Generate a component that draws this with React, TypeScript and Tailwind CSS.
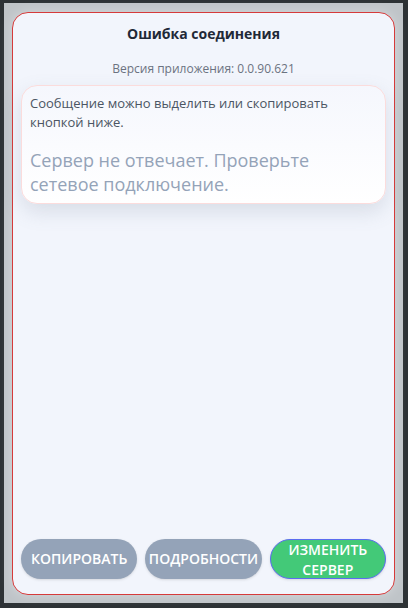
import React from "react";

export default function App() {
  return (
    <div
      className="w-[408px] h-[608px] bg-[#2d3235] pl-[4px] pt-[3px] pr-[5px] pb-[5px]"
      style={{ fontFamily: '"Open Sans", "Noto Sans", sans-serif' }}
    >
      <div className="w-full h-full bg-[#bfc4c8] pl-[8px] pt-[9px] pr-[8px] pb-[8px]">
        <div className="w-full h-full bg-[#f2f5fc] border border-[#d63a3a] rounded-[16px] flex flex-col px-[8px] pt-[11px] pb-[15px] shadow-[0_0_12px_rgba(255,255,255,0.35)]">
          <div className="text-center text-[14px] leading-[20px] font-bold text-[#1f2937]">
            Ошибка соединения
          </div>
          <div className="text-center text-[12px] leading-[16px] text-[#6b7280] mt-[17px]">
            Версия приложения: 0.0.90.621
          </div>
          <div className="mt-[8px] rounded-[16px] border border-[#fbdcdc] bg-gradient-to-b from-[#f5f7fd] to-white px-[8px] pt-[8px] pb-[7px] shadow-[0_8px_20px_rgba(100,116,139,0.18)]">
            <div className="text-[13px] leading-[19px] text-[#4b5563]">
              Сообщение можно выделить или скопировать кнопкой ниже.
            </div>
            <div className="mt-[16px] text-[18px] leading-[24px] text-[#94a3b8]">
              Сервер не отвечает. Проверьте сетевое подключение.
            </div>
          </div>
          <div className="flex-1" />
          <div className="flex gap-[8px]">
            <button className="w-[117px] h-[40px] rounded-full bg-[#94a3b8] text-white text-[14px] leading-[20px] font-semibold uppercase shadow-sm">
              Копировать
            </button>
            <button className="w-[117px] h-[40px] rounded-full bg-[#94a3b8] text-white text-[14px] leading-[20px] font-semibold uppercase shadow-sm">
              Подробности
            </button>
            <button className="w-[117px] h-[40px] rounded-full bg-[#43c978] border border-[#5b6cf0] text-white text-[14px] leading-[20px] font-semibold uppercase shadow-sm">
              Изменить
              <br />
              сервер
            </button>
          </div>
        </div>
      </div>
    </div>
  );
}
